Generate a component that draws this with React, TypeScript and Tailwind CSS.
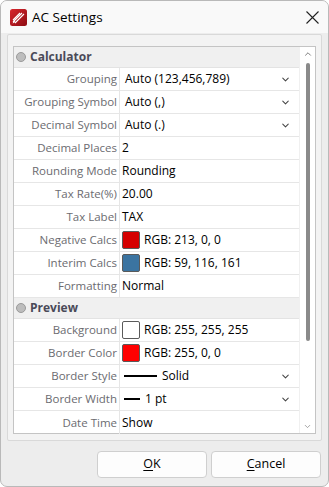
import { ChevronDown, ChevronUp } from "lucide-react";

type Row =
  | { kind: "header"; label: string }
  | {
      kind: "row";
      label: string;
      value: string;
      dropdown?: boolean;
      swatch?: string;
      line?: "long" | "short";
    };

const rows: Row[] = [
  { kind: "header", label: "Calculator" },
  { kind: "row", label: "Grouping", value: "Auto (123,456,789)", dropdown: true },
  { kind: "row", label: "Grouping Symbol", value: "Auto (,)", dropdown: true },
  { kind: "row", label: "Decimal Symbol", value: "Auto (.)", dropdown: true },
  { kind: "row", label: "Decimal Places", value: "2" },
  { kind: "row", label: "Rounding Mode", value: "Rounding" },
  { kind: "row", label: "Tax Rate(%)", value: "20.00" },
  { kind: "row", label: "Tax Label", value: "TAX" },
  { kind: "row", label: "Negative Calcs", value: "RGB: 213, 0, 0", swatch: "bg-[#d50000]" },
  { kind: "row", label: "Interim Calcs", value: "RGB: 59, 116, 161", swatch: "bg-[#3b74a1]" },
  { kind: "row", label: "Formatting", value: "Normal" },
  { kind: "header", label: "Preview" },
  { kind: "row", label: "Background", value: "RGB: 255, 255, 255", swatch: "bg-white" },
  { kind: "row", label: "Border Color", value: "RGB: 255, 0, 0", swatch: "bg-[#ff0000]" },
  { kind: "row", label: "Border Style", value: "Solid", dropdown: true, line: "long" },
  { kind: "row", label: "Border Width", value: "1 pt", dropdown: true, line: "short" },
  { kind: "row", label: "Date Time", value: "Show" },
];

function AppIcon() {
  return (
    <svg width="17" height="17" viewBox="0 0 17 17">
      <defs>
        <linearGradient id="ic" x1="0" y1="0" x2="1" y2="1">
          <stop offset="0" stopColor="#d8272e" />
          <stop offset="1" stopColor="#8e0c12" />
        </linearGradient>
      </defs>
      <rect x="0" y="0" width="17" height="17" rx="2.5" fill="url(#ic)" />
      <path d="M3 13 L12 4 M5 14 L14 5 M3 11 L10 4" stroke="#fff" strokeWidth="1.1" fill="none" />
      <path d="M2.5 14.5 L4 11.5 L5.5 13 Z" fill="#fff" />
    </svg>
  );
}

export default function App() {
  return (
    <div
      className="w-[329px] h-[487px] flex flex-col bg-[#ededed] border border-[#b9b9b9] rounded-[7px] overflow-hidden text-[12px]"
      style={{ fontFamily: '"Segoe UI", "Open Sans", "Noto Sans", sans-serif' }}
    >
      {/* Title bar */}
      <div className="h-[32px] shrink-0 flex items-center bg-[#f9f9f9] pl-[9px] pr-[8px]">
        <AppIcon />
        <span className="ml-[5px] text-[13.5px] text-black">AC Settings</span>
        <svg className="ml-auto mr-[1px]" width="13" height="13" viewBox="0 0 13 13">
          <path d="M0.5 0.5 L12.5 12.5 M12.5 0.5 L0.5 12.5" stroke="#222" strokeWidth="1.1" />
        </svg>
      </div>

      {/* Body */}
      <div className="flex-1 flex flex-col px-[6px] pt-[1px] pb-[9px]">
        <div className="h-[407px] border border-[#d9d9d9] bg-[#f3f3f3] rounded-[2px] pl-[5px] pr-[5px] pt-[11px]">
          <div className="h-[388px] flex border border-[#c4c4c4] bg-white">
            <div className="flex-1 flex flex-col">
              {rows.map((r, i) =>
                r.kind === "header" ? (
                  <div
                    key={i}
                    className="h-[21px] shrink-0 flex items-center bg-[#f0f0f0] border-b border-[#e3e3e3] pl-[2px]"
                  >
                    <span className="w-[10px] h-[10px] rounded-full bg-[#bdbdbd] border border-[#9a9a9a]" />
                    <span className="ml-[4px] font-bold text-[#4a4a58]">{r.label}</span>
                  </div>
                ) : (
                  <div key={i} className="h-[23px] shrink-0 flex border-b border-[#e6e6e6] last:border-b-0">
                    <div className="w-[106px] shrink-0 flex items-center justify-end pr-[2px] border-r border-[#e6e6e6] text-[11.5px] text-[#6b6b70]">
                      {r.label}
                    </div>
                    <div className="flex-1 flex items-center pl-[2px] pr-[8px] text-black">
                      {r.swatch && (
                        <span
                          className={`w-[18px] h-[18px] rounded-[2px] border border-[#5a5a5a] mr-[4px] ${r.swatch}`}
                        />
                      )}
                      {r.line === "long" && <span className="w-[33px] h-[1.5px] bg-black ml-[2px] mr-[5px]" />}
                      {r.line === "short" && <span className="w-[16px] h-[1.5px] bg-black ml-[2px] mr-[5px]" />}
                      <span className={r.dropdown && !r.line ? "pl-[3px]" : ""}>{r.value}</span>
                      {r.dropdown && (
                        <ChevronDown className="ml-auto text-[#444]" size={11} strokeWidth={2.2} />
                      )}
                    </div>
                  </div>
                )
              )}
            </div>
            {/* Scrollbar */}
            <div className="w-[16px] shrink-0 flex flex-col items-center border-l border-[#f0f0f0] py-[2px]">
              <ChevronUp className="text-[#666]" size={10} strokeWidth={2} />
              <div className="mt-[4px] w-[4px] h-[278px] rounded-full bg-[#8a8a8a]" />
              <ChevronDown className="mt-auto text-[#888]" size={9} strokeWidth={2} />
            </div>
          </div>
        </div>

        {/* Buttons */}
        <div className="mt-[10px] flex justify-end gap-[4px] pr-[1px]">
          <button className="w-[110px] h-[27px] rounded-[4px] border border-[#cfcfcf] bg-[#fdfdfd] text-[12.5px] text-black">
            <span className="underline underline-offset-2">O</span>K
          </button>
          <button className="w-[110px] h-[27px] rounded-[4px] border border-[#cfcfcf] bg-[#fdfdfd] text-[12.5px] text-black">
            <span className="underline underline-offset-2">C</span>ancel
          </button>
        </div>
      </div>
    </div>
  );
}
